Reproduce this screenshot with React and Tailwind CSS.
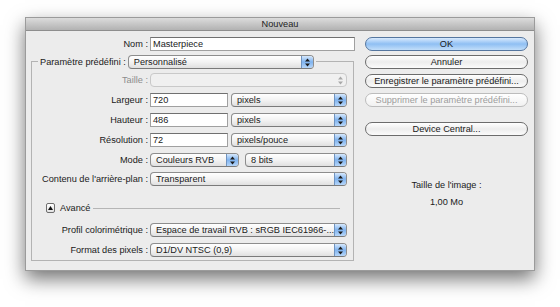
import React from 'react';

const Arrows = ({ color = '#1b1b1b' }) => (
  <svg width="5" height="9" viewBox="0 0 5 9">
    <polygon points="0,3.6 2.5,0.6 5,3.6" fill={color} />
    <polygon points="0,5.4 2.5,8.4 5,5.4" fill={color} />
  </svg>
);

const Select = ({ w, children, disabled }) => (
  <div
    className={`${w} h-[14px] flex rounded-[4px] border overflow-hidden ${
      disabled
        ? 'border-[#c9c9c9] bg-[#f0f0f0]'
        : 'border-[#8d8d8d] border-b-[#7a7a7a] bg-linear-to-b from-white via-[#f3f3f3] to-[#e0e0e0]'
    }`}
  >
    <span className="flex-1 pl-[5px] leading-[12px] whitespace-nowrap overflow-hidden">{children}</span>
    {disabled ? (
      <span className="w-[12px] flex items-center justify-center">
        <Arrows color="#a8a8a8" />
      </span>
    ) : (
      <span className="w-[12px] flex items-center justify-center border-l border-[#6f93c0] bg-linear-to-b from-[#d6e8fc] via-[#7fb3ef] to-[#b6d6f9]">
        <Arrows />
      </span>
    )}
  </div>
);

const Input = ({ w, children }) => (
  <div className={`${w} h-[14px] bg-white border border-[#a0a0a0] border-t-[#707070] pl-[2px] leading-[12px]`}>
    {children}
  </div>
);

const Row = ({ label, disabled, children, mt = 'mt-[6px]' }) => (
  <div className={`flex items-center h-[14px] ${mt}`}>
    <span className={`w-[116px] text-right leading-[14px] ${disabled ? 'text-[#8c8c8c]' : ''}`}>{label}</span>
    <div className="ml-[2px] flex items-center">{children}</div>
  </div>
);

const Button = ({ children, primary, disabled, mt }) => (
  <div
    className={`h-[14px] rounded-full border text-center leading-[12px] whitespace-nowrap ${mt} ${
      primary
        ? 'border-[#55769f] bg-linear-to-b from-[#d9eafd] via-[#8fbff3] to-[#c2def9]'
        : disabled
        ? 'border-[#bcbcbc] text-[#9d9d9d] bg-linear-to-b from-white to-[#f1f1f1]'
        : 'border-[#6c6c6c] bg-linear-to-b from-white via-[#ededed] to-[#fbfbfb]'
    }`}
  >
    {children}
  </div>
);

export default function App() {
  return (
    <div className="w-[560px] h-[307px] bg-white pt-[17px] pl-[25px] overflow-hidden font-['Liberation_Sans',Arial,sans-serif] text-[9.2px] text-[#1a1a1a]">
      <div className="w-[510px] h-[254px] flex flex-col bg-[#ececec] border border-[#9b9b9b] shadow-[0_8px_18px_rgba(0,0,0,0.55)]">
        {/* Title bar */}
        <div className="h-[13px] shrink-0 bg-linear-to-b from-[#dcdcdc] to-[#b2b2b2] border-b border-[#8e8e8e] text-center leading-[12px] text-[#222]">
          Nouveau
        </div>

        <div className="flex pt-[6px]">
          {/* Left column */}
          <div className="ml-[5px] w-[324px]">
            <div className="flex items-center h-[14px]">
              <span className="w-[117px] text-right leading-[14px]">Nom :</span>
              <div className="ml-[2px]">
                <Input w="w-[205px]">Masterpiece</Input>
              </div>
            </div>

            <div className="mt-[10px] w-[323px] h-[200px] border border-[#b3b3b3]">
              <div className="flex items-center h-[14px] -mt-[7px] pl-[6px]">
                <span className="bg-[#ececec] px-[2px] leading-[14px]">Paramètre prédéfini :</span>
                <div className="bg-[#ececec] pr-[2px]">
                  <Select w="w-[186px]">Personnalisé</Select>
                </div>
              </div>

              <Row label="Taille :" disabled mt="mt-[4px]">
                <Select w="w-[197px]" disabled />
              </Row>
              <Row label="Largeur :">
                <Input w="w-[78px]">720</Input>
                <div className="ml-[3px]">
                  <Select w="w-[116px]">pixels</Select>
                </div>
              </Row>
              <Row label="Hauteur :">
                <Input w="w-[78px]">486</Input>
                <div className="ml-[3px]">
                  <Select w="w-[116px]">pixels</Select>
                </div>
              </Row>
              <Row label="Résolution :">
                <Input w="w-[78px]">72</Input>
                <div className="ml-[3px]">
                  <Select w="w-[116px]">pixels/pouce</Select>
                </div>
              </Row>
              <Row label="Mode :">
                <Select w="w-[89px]">Couleurs RVB</Select>
                <div className="ml-[6px]">
                  <Select w="w-[102px]">8 bits</Select>
                </div>
              </Row>
              <Row label="Contenu de l'arrière-plan :" mt="mt-[5px]">
                <Select w="w-[197px]">Transparent</Select>
              </Row>

              {/* Avancé */}
              <div className="flex items-center h-[10px] mt-[17px] pl-[14px]">
                <div className="w-[9px] h-[10px] rounded-[2px] border border-[#6e6e6e] bg-linear-to-b from-white to-[#e2e2e2] flex items-center justify-center">
                  <svg width="5" height="4" viewBox="0 0 5 4">
                    <polygon points="0,4 2.5,0 5,4" fill="#111" />
                  </svg>
                </div>
                <span className="ml-[5px] leading-[10px]">Avancé</span>
                <div className="ml-[3px] w-[247px] h-px bg-[#b5b5b5]" />
              </div>

              <Row label="Profil colorimétrique :" mt="mt-[10px]">
                <Select w="w-[197px]">Espace de travail RVB : sRGB IEC61966-...</Select>
              </Row>
              <Row label="Format des pixels :">
                <Select w="w-[197px]">D1/DV NTSC (0,9)</Select>
              </Row>
            </div>
          </div>

          {/* Right column */}
          <div className="ml-[10px] w-[163px]">
            <Button primary mt="">OK</Button>
            <Button mt="mt-[4px]">Annuler</Button>
            <Button mt="mt-[5px]">Enregistrer le paramètre prédéfini...</Button>
            <Button disabled mt="mt-[5px]">Supprimer le paramètre prédéfini...</Button>
            <Button mt="mt-[15px]">Device Central...</Button>
            <div className="mt-[41px] text-center leading-[17px]">
              <div>Taille de l'image :</div>
              <div>1,00 Mo</div>
            </div>
          </div>
        </div>
      </div>
    </div>
  );
}
